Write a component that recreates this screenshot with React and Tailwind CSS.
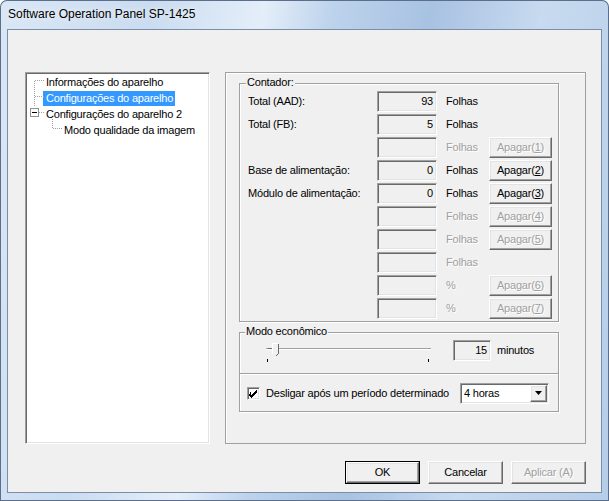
import React from "react";

// --- classic win32 bevels ---
const sunken = "border border-t-[#a0a0a0] border-l-[#a0a0a0] border-r-white border-b-white shadow-[inset_1px_1px_0_#696969,inset_-1px_-1px_0_#e3e3e3]";
const raised = "border border-t-white border-l-white border-r-[#696969] border-b-[#696969] shadow-[inset_-1px_-1px_0_#a0a0a0,inset_1px_1px_0_#e3e3e3]";
const etched = "border border-[#a0a0a0] shadow-[inset_1px_1px_0_#fff,1px_1px_0_#fff]";
const disabledText = "text-[#a0a0a0] [text-shadow:1px_1px_0_#fff]";

const ROWS = [
  { label: "Total (AAD):", value: "93", unit: "Folhas", on: true },
  { label: "Total (FB):", value: "5", unit: "Folhas", on: true },
  { label: "", value: "", unit: "Folhas", on: false, btn: "1" },
  { label: "Base de alimentação:", value: "0", unit: "Folhas", on: true, btn: "2" },
  { label: "Módulo de alimentação:", value: "0", unit: "Folhas", on: true, btn: "3" },
  { label: "", value: "", unit: "Folhas", on: false, btn: "4" },
  { label: "", value: "", unit: "Folhas", on: false, btn: "5" },
  { label: "", value: "", unit: "Folhas", on: false },
  { label: "", value: "", unit: "%", on: false, btn: "6" },
  { label: "", value: "", unit: "%", on: false, btn: "7" },
];

function TreeLines() {
  // dotted connectors of the tree view
  return (
    <svg className="absolute left-0 top-0" width="60" height="140" shapeRendering="crispEdges">
      <g stroke="#a0a0a0" strokeDasharray="1 1">
        <line x1="8.5" y1="8" x2="8.5" y2="34" />
        <line x1="9" y1="7.5" x2="18" y2="7.5" />
        <line x1="9" y1="23.5" x2="18" y2="23.5" />
        <line x1="13" y1="39.5" x2="18" y2="39.5" />
        <line x1="26.5" y1="44" x2="26.5" y2="56" />
        <line x1="27" y1="55.5" x2="36" y2="55.5" />
      </g>
      <rect x="4.5" y="35.5" width="8" height="8" fill="#fff" stroke="#919191" />
      <line x1="6" y1="39.5" x2="11" y2="39.5" stroke="#000" />
    </svg>
  );
}

function Btn({ children, disabled, def, className = "" }) {
  return (
    <div className={`${def ? "border border-black" : ""} ${className}`}>
      <div className={`${raised} h-full w-full flex items-center justify-center bg-[#f0f0f0] ${disabled ? disabledText : "text-black"}`}>
        {children}
      </div>
    </div>
  );
}

export default function App() {
  return (
    <div className="w-[609px] h-[501px] overflow-hidden rounded-t-[7px] flex flex-col px-[7px] pb-[8px] bg-[linear-gradient(100deg,#dae7f5_0%,#cadcf0_22%,#e4eef9_38%,#bdd3ec_48%,#a8c2e2_62%,#c7daef_78%,#b6cde8_100%)] shadow-[inset_0_0_0_1px_#5b6e8b] font-['Liberation_Sans',Arial,sans-serif] text-[11px] tracking-[-0.2px] text-black">
      <div className="h-[29px] flex items-center pl-[1px] pb-[1px] text-[12px] tracking-normal [text-shadow:0_0_6px_#fff]">
        Software Operation Panel SP-1425
      </div>

      <div className="flex-1 bg-[#f0f0f0] border border-[#7b8ea8] flex flex-col">
        <div className="flex gap-[15px] pl-[17px] pt-[42px]">
          {/* tree */}
          <div className={`${sunken} w-[185px] h-[372px] bg-white relative`}>
            <TreeLines />
            <div className="flex flex-col pt-[1px] leading-[16px]">
              <div className="h-[16px] pl-[20px] flex items-center">Informações do aparelho</div>
              <div className="h-[16px] pl-[17px] flex items-center">
                <span className="bg-[#3399ff] text-white pl-[3px] pr-[2px] h-[15px] flex items-center">Configurações do aparelho</span>
              </div>
              <div className="h-[16px] pl-[20px] flex items-center">Configurações do aparelho 2</div>
              <div className="h-[16px] pl-[38px] flex items-center">Modo qualidade da imagem</div>
            </div>
          </div>

          {/* page */}
          <div className="w-[361px] h-[372px] border border-[#a0a0a0] shadow-[inset_1px_1px_0_#fff] pl-[13px] pt-[10px]">
            <div className={`${etched} relative w-[320px] h-[239px] pt-[7px] pl-[8px]`}>
              <span className="absolute -top-[8px] left-[6px] px-[1px] bg-[#f0f0f0] leading-[13px]">Contador:</span>
              {ROWS.map((r, i) => (
                <div key={i} className="h-[23px] flex items-start">
                  <div className="w-[129px] h-[21px] flex items-center">{r.label}</div>
                  <div className={`${sunken} w-[60px] h-[21px] flex items-center justify-end pr-[3px]`}>{r.value}</div>
                  <div className={`w-[52px] h-[21px] pl-[9px] flex items-center ${r.on ? "" : disabledText}`}>{r.unit}</div>
                  {r.btn && (
                    <Btn disabled={!r.on} className="w-[63px] h-[21px]">
                      Apagar(<span className="underline underline-offset-[1px]">{r.btn}</span>)
                    </Btn>
                  )}
                </div>
              ))}
            </div>

            <div className={`${etched} relative w-[320px] h-[80px] mt-[10px] flex flex-col`}>
              <span className="absolute -top-[8px] left-[5px] px-[1px] bg-[#f0f0f0] leading-[13px]">Modo econômico</span>
              <div className="h-[40px] flex items-start pt-[7px] pl-[22px]">
                <svg width="176" height="24" shapeRendering="crispEdges">
                  <line x1="4" y1="8.5" x2="169" y2="8.5" stroke="#a0a0a0" />
                  <line x1="4" y1="9.5" x2="169" y2="9.5" stroke="#fff" />
                  <line x1="5.5" y1="19" x2="5.5" y2="22" stroke="#000" />
                  <line x1="166.5" y1="19" x2="166.5" y2="22" stroke="#000" />
                  <path d="M10.5 3.5 H16.5 V13.5 L13.5 16.5 L10.5 13.5 Z" fill="#f0f0f0" stroke="none" />
                  <path d="M10.5 13.5 V3.5 H16" stroke="#fff" fill="none" />
                  <path d="M16.5 3.5 V13.5 L13.5 16.5" stroke="#696969" fill="none" />
                  <path d="M6 8.5 H10" stroke="#696969" />
                </svg>
                <div className={`${sunken} ml-[15px] w-[38px] h-[21px] flex items-center justify-end pr-[3px]`}>15</div>
                <div className="ml-[6px] h-[21px] flex items-center">minutos</div>
              </div>
              <div className="h-0 border-t border-[#a0a0a0] shadow-[0_1px_0_#fff]" />
              <div className="flex-1 flex items-center pl-[7px] pt-[1px]">
                <div className={`${sunken} w-[13px] h-[13px] bg-white flex items-center justify-center`}>
                  <svg width="9" height="9" shapeRendering="crispEdges">
                    <path d="M1 3h1v3h1v-1h1v-1h1v-1h1v-1h1v-1h1v3h-1v1h-1v1h-1v1h-1v1h-1v1h-1v-1h-1v-1h-1z" fill="#000" />
                  </svg>
                </div>
                <div className="ml-[6px] w-[194px]">Desligar após um período determinado</div>
                <div className={`${sunken} w-[89px] h-[21px] bg-white flex items-center pl-[3px] pr-[1px]`}>
                  <span className="flex-1">4 horas</span>
                  <div className={`${raised} w-[17px] h-[17px] bg-[#f0f0f0] flex items-center justify-center`}>
                    <svg width="7" height="4"><path d="M0 0h7L3.5 4z" fill="#000" /></svg>
                  </div>
                </div>
              </div>
            </div>
          </div>
        </div>

        <div className="flex justify-end gap-[8px] pr-[15px] mt-[17px]">
          <Btn def className="w-[75px] h-[23px]">OK</Btn>
          <Btn className="w-[75px] h-[23px]">Cancelar</Btn>
          <Btn disabled className="w-[75px] h-[23px]">Aplicar (A)</Btn>
        </div>
      </div>
    </div>
  );
}
